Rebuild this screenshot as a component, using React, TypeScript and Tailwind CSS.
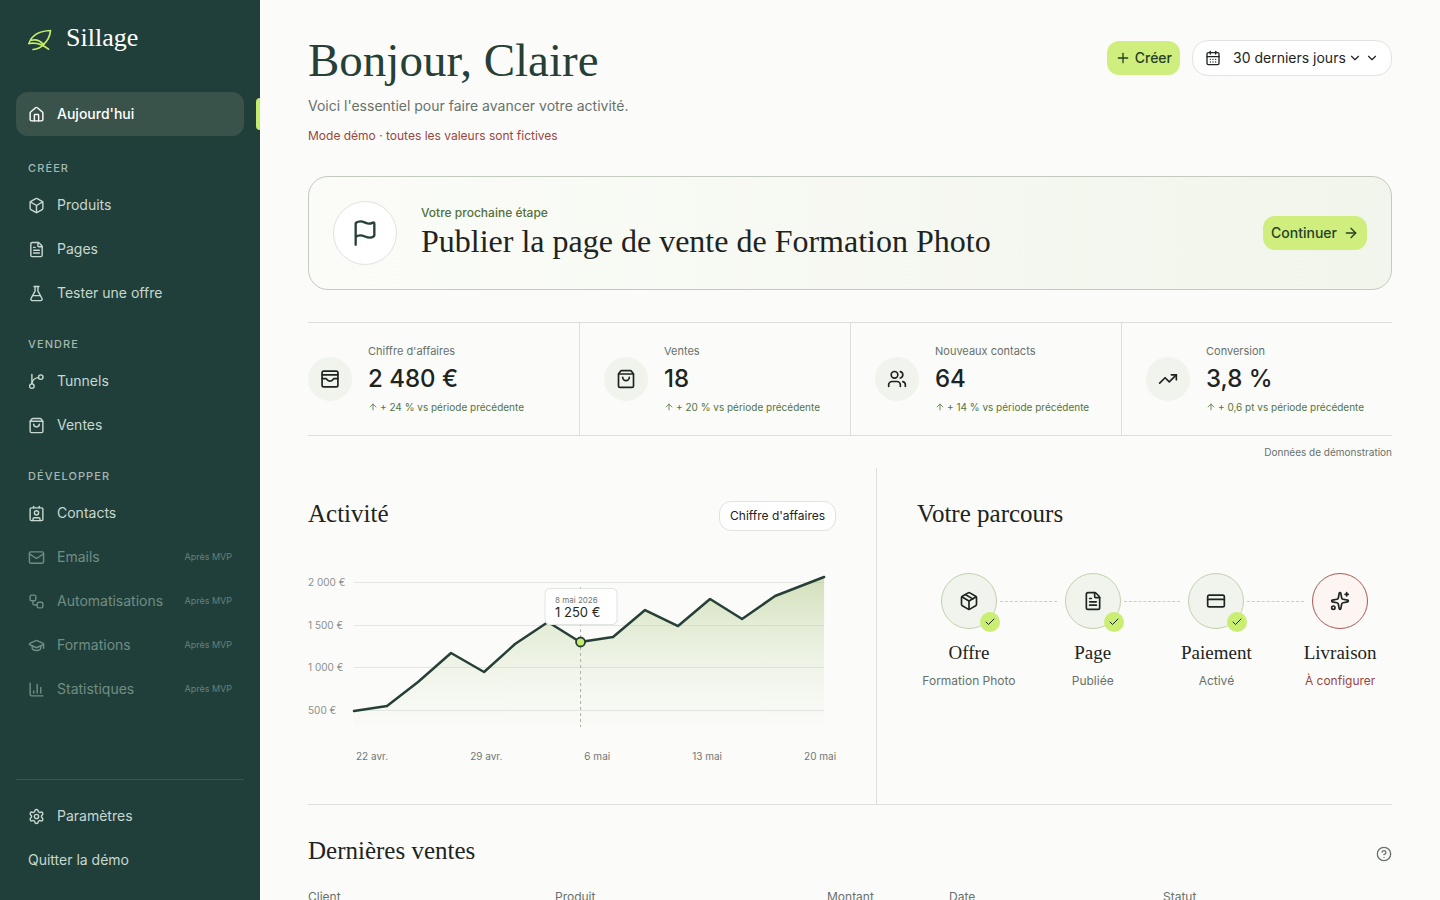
import type { ComponentType, SVGProps } from 'react';
import {
  ArrowRight,
  ArrowUp,
  Box,
  CalendarDays,
  ChartColumn,
  Check,
  ChevronDown,
  CircleQuestionMark,
  Contact,
  CreditCard,
  FileText,
  Flag,
  FlaskConical,
  GraduationCap,
  House,
  Mail,
  Package,
  Plus,
  Settings,
  ShoppingBag,
  Sparkles,
  TrendingUp,
  Users,
  Workflow,
} from 'lucide-react';

type Icon = ComponentType<SVGProps<SVGSVGElement>>;
type NavItem = { label: string; icon: Icon; soon?: boolean };

const serif = "font-['Liberation_Serif',serif]";

function FunnelBranch(props: SVGProps<SVGSVGElement>) {
  return (
    <svg viewBox="0 0 24 24" fill="none" stroke="currentColor" strokeLinecap="round" strokeLinejoin="round" {...props}>
      <path d="M5.500 2v13" />
      <circle cx="5.500" cy="18.500" r="3.200" />
      <circle cx="18" cy="5.800" r="3.200" />
      <path d="M14.800 6.500C9.500 7 6.200 9.500 5.500 15" />
    </svg>
  );
}

function CashBox(props: SVGProps<SVGSVGElement>) {
  return (
    <svg viewBox="0 0 24 24" fill="none" stroke="currentColor" strokeLinecap="round" strokeLinejoin="round" {...props}>
      <rect x="2.500" y="2.500" width="19" height="19" rx="2" />
      <path d="M2.500 7H21.500" />
      <path d="M2.500 11.500H7C8.500 11.500 8.500 14.500 12 14.500S15.500 11.500 17 11.500H21.500" />
    </svg>
  );
}

function Logo() {
  return (
    <svg viewBox="0 0 24 24" className="h-6 w-6" fill="none" stroke="#c5ec6c" strokeWidth="1.700" strokeLinecap="round" strokeLinejoin="round">
      <path d="M1 15.500C3.500 7.500 11 3 22.500 2.500C22 8 19.500 13 15.500 16.500C12 12.500 7 11.300 3.500 12.200" />
      <path d="M1 15.500C7.500 14.200 14 16 20.500 21.200" />
      <path d="M5 21.500C10 21.200 13 19.500 15.500 16.500" />
    </svg>
  );
}

const sections: { title: string; items: NavItem[] }[] = [
  {
    title: 'CRÉER',
    items: [
      { label: 'Produits', icon: Box },
      { label: 'Pages', icon: FileText },
      { label: 'Tester une offre', icon: FlaskConical },
    ],
  },
  {
    title: 'VENDRE',
    items: [
      { label: 'Tunnels', icon: FunnelBranch },
      { label: 'Ventes', icon: ShoppingBag },
    ],
  },
  {
    title: 'DÉVELOPPER',
    items: [
      { label: 'Contacts', icon: Contact },
      { label: 'Emails', icon: Mail, soon: true },
      { label: 'Automatisations', icon: Workflow, soon: true },
      { label: 'Formations', icon: GraduationCap, soon: true },
      { label: 'Statistiques', icon: ChartColumn, soon: true },
    ],
  },
];

const stats = [
  { label: "Chiffre d'affaires", value: '2 480 €', change: '+ 24 %', icon: CashBox },
  { label: 'Ventes', value: '18', change: '+ 20 %', icon: ShoppingBag },
  { label: 'Nouveaux contacts', value: '64', change: '+ 14 %', icon: Users },
  { label: 'Conversion', value: '3,8 %', change: '+ 0,6 pt', icon: TrendingUp },
];

const steps = [
  { title: 'Offre', status: 'Formation Photo', icon: Package, done: true },
  { title: 'Page', status: 'Publiée', icon: FileText, done: true },
  { title: 'Paiement', status: 'Activé', icon: CreditCard, done: true },
  { title: 'Livraison', status: 'À configurer', icon: Sparkles, done: false },
];

function NavLink({ label, icon: Icon, soon }: NavItem) {
  return (
    <a href="#" className={`flex h-11 items-center gap-3 px-3 text-sm ${soon ? 'text-[#6f8d84]' : 'text-[#c6d8d0]'}`}>
      <Icon className="h-[17px] w-[17px]" strokeWidth={2} />
      <span className="flex-1">{label}</span>
      {soon && <span className="text-[9px] text-[#64817a]">Après MVP</span>}
    </a>
  );
}

function Sidebar() {
  return (
    <aside className="flex w-[260px] shrink-0 flex-col bg-[#213f3a] px-4 pb-[18px]">
      <a href="#" className="flex h-[92px] items-start gap-[14px] px-3 pt-5 text-white">
        <span className="pt-2"><Logo /></span>
        <span className={`${serif} text-[26px] leading-9`}>Sillage</span>
      </a>
      <nav className="flex-1">
        <div className="relative mb-[3px]">
          <a href="#" className="flex h-11 items-center gap-3 rounded-xl bg-[#39534b] px-3 text-sm font-medium text-white">
            <House className="h-[17px] w-[17px]" strokeWidth={2} />
            Aujourd'hui
          </a>
          <span className="absolute -right-4 top-1.5 h-8 w-1 rounded-l bg-[#c5ec6c]" />
        </div>
        {sections.map((section) => (
          <div key={section.title}>
            <h2 className="px-3 pb-[7px] pt-[21px] text-[11px] font-medium leading-4 tracking-widest text-[#a3b9b0]">
              {section.title}
            </h2>
            {section.items.map((item) => (
              <NavLink key={item.label} {...item} />
            ))}
          </div>
        ))}
      </nav>
      <div className="border-t border-[#3a564f] pt-[14px]">
        <NavLink label="Paramètres" icon={Settings} />
        <button className="flex h-11 items-center px-3 text-sm text-[#c6d8d0]">Quitter la démo</button>
      </div>
    </aside>
  );
}

// points de la courbe, dans le repère du graphique
const points = [
  [46, 143], [79, 138], [110, 114], [143, 85], [176, 104], [207, 76], [240, 54], [272, 74],
  [305, 69], [337, 42], [370, 58], [402, 31], [434, 51], [467, 28], [516, 9],
];
const line = points.map(([x, y]) => `${x},${y}`).join(' ');

function ActivityChart() {
  return (
    <svg viewBox="0 0 528 168" className="block w-full" role="img" aria-label="Activité sur 30 jours">
      <defs>
        <linearGradient id="area" x1="0" y1="0" x2="0" y2="1">
          <stop offset="0" stopColor="#a8c47a" stopOpacity="0.5" />
          <stop offset="1" stopColor="#dcebd0" stopOpacity="0.05" />
        </linearGradient>
      </defs>
      {['2 000 €', '1 500 €', '1 000 €', '500 €'].map((label, i) => (
        <g key={label}>
          <text x="0" y={18 + Math.round(i * 42.6)} fontSize="10" fill="#8a918c">{label}</text>
          <path d={`M46 ${14.5 + Math.round(i * 42.6)}H516`} stroke="#e3e6e1" />
        </g>
      ))}
      <polygon points={`46,158 ${line} 516,158`} fill="url(#area)" />
      <path d="M272.500 19V159" stroke="#aab3a8" strokeDasharray="3 3" />
      <polyline points={line} fill="none" stroke="#263f37" strokeWidth="2.500" strokeLinejoin="round" strokeLinecap="round" />
      <rect x="237" y="20.500" width="72" height="36" rx="5" fill="#fff" stroke="#e1e5df" />
      <text x="247" y="35" fontSize="8" fill="#707873">8 mai 2026</text>
      <text x="247" y="49" fontSize="13" fill="#1f2925">1 250 €</text>
      <circle cx="272.500" cy="74" r="4.500" fill="#c5ec6c" stroke="#263f37" strokeWidth="1.800" />
    </svg>
  );
}

export default function App() {
  return (
    <div className="flex h-screen bg-[#fbfbf9] font-[Inter,sans-serif] text-[#1d2421]">
      <Sidebar />
      <main className="min-w-0 flex-1 overflow-y-auto px-12 pt-9 [scrollbar-width:none]">
        {/* En-tête */}
        <header className="flex items-start justify-between">
          <div>
            <h1 className={`${serif} text-[47px] leading-[48px] text-[#263f37]`}>Bonjour, Claire</h1>
            <p className="mt-3 text-sm leading-5 text-[#68716c]">Voici l'essentiel pour faire avancer votre activité.</p>
            <p className="mt-3 text-xs leading-4 text-[#9a4640]">Mode démo · toutes les valeurs sont fictives</p>
          </div>
          <div className="flex items-center gap-3 pt-1">
            <button className="flex h-[34px] items-center gap-1 rounded-xl bg-[#cfee7e] px-2 text-sm font-medium text-[#263f24]">
              <Plus className="h-4 w-4" />
              Créer
            </button>
            <button className="flex h-9 w-[200px] items-center rounded-2xl border border-[#e1e4de] bg-white px-3 text-sm">
              <CalendarDays className="h-4 w-4" strokeWidth={2} />
              <span className="ml-3 mr-0.5 whitespace-nowrap">30 derniers jours</span>
              <ChevronDown className="h-3.5 w-3.5" />
              <ChevronDown className="ml-auto h-3.5 w-3.5" />
            </button>
          </div>
        </header>

        {/* Prochaine étape */}
        <section className="mt-8 flex items-center gap-6 rounded-[20px] border border-[#c3cbbf] bg-linear-to-r from-[#fbfcf8] to-[#f1f5eb] p-6">
          <div className="flex h-16 w-16 items-center justify-center rounded-full border border-[#dfe3df] bg-white text-[#263f37]">
            <Flag className="h-7 w-7" strokeWidth={2} />
          </div>
          <div className="flex-1">
            <p className="text-xs font-medium leading-4 text-[#55703a]">Votre prochaine étape</p>
            <h2 className={`${serif} text-[32px] leading-10`}>Publier la page de vente de Formation Photo</h2>
          </div>
          <button className="flex h-[34px] items-center gap-1.5 rounded-xl bg-[#cfee7e] px-2 text-sm font-medium text-[#263f24]">
            Continuer
            <ArrowRight className="h-4 w-4" />
          </button>
        </section>

        {/* Indicateurs */}
        <section className="mt-8 grid grid-cols-4 border-y border-[#dcdfda]">
          {stats.map(({ label, value, change, icon: Icon }) => (
            <div key={label} className="flex h-28 items-center gap-4 border-l border-[#dcdfda] pl-6 first:border-l-0 first:pl-0">
              <div className="flex h-11 w-11 shrink-0 items-center justify-center rounded-full bg-[#f0f4ed]">
                <Icon className="h-5 w-5" strokeWidth={2} />
              </div>
              <div>
                <p className="text-[11px] leading-4 text-[#68716c]">{label}</p>
                <p className="my-1 text-2xl font-medium leading-8">{value}</p>
                <p className="flex items-center gap-0.5 whitespace-nowrap text-[10px] leading-4 text-[#55753f]">
                  <ArrowUp className="h-2.5 w-2.5" />
                  {change} vs période précédente
                </p>
              </div>
            </div>
          ))}
        </section>
        <p className="mt-2 pb-2 text-right text-[10px] leading-4 text-[#68716c]">Données de démonstration</p>

        <div className="grid grid-cols-[21fr_19fr] border-b border-[#dcdfda]">
          {/* Activité */}
          <section className="border-r border-[#dcdfda] pb-10 pr-10 pt-8">
            <div className="flex h-8 items-start justify-between">
              <h2 className={`${serif} text-[25px] leading-7`}>Activité</h2>
              <button className="mt-px h-[30px] rounded-xl border border-[#e1e4de] bg-white px-[10px] text-xs">
                Chiffre d'affaires
              </button>
            </div>
            <div className="pt-9">
              <ActivityChart />
            </div>
            <div className="flex justify-between pl-12 pt-3 text-[10px] leading-4 text-[#707873]">
              <span>22 avr.</span>
              <span>29 avr.</span>
              <span>6 mai</span>
              <span>13 mai</span>
              <span>20 mai</span>
            </div>
          </section>

          {/* Parcours */}
          <section className="pl-10 pt-8">
            <h2 className={`${serif} text-[25px] leading-7`}>Votre parcours</h2>
            <ol className="mt-[45px] grid grid-cols-4 gap-5">
              {steps.map(({ title, status, icon: Icon, done }) => (
                <li key={title} className="relative flex flex-col items-center whitespace-nowrap">
                  <div
                    className={`relative flex h-14 w-14 items-center justify-center rounded-full border ${
                      done ? 'border-[#c2d1ac] bg-[#f0f4ed]' : 'border-[#a85a55] bg-[#fdf5f2]'
                    }`}
                  >
                    <Icon className="h-5 w-5" strokeWidth={2} />
                    {done && (
                      <span className="absolute -bottom-1 -right-1 flex h-5 w-5 items-center justify-center rounded-full bg-[#c9ee72]">
                        <Check className="h-3 w-3" />
                      </span>
                    )}
                  </div>
                  {done && (
                    <span className="absolute left-[calc(50%+31px)] top-7 w-[calc(100%-47px)] border-t border-dashed border-[#c9cec6]" />
                  )}
                  <h3 className={`${serif} mt-3 text-[19px] leading-6`}>{title}</h3>
                  <p className={`mt-2 text-xs leading-4 ${done ? 'text-[#68716c]' : 'text-[#9a4640]'}`}>{status}</p>
                </li>
              ))}
            </ol>
          </section>
        </div>

        {/* Dernières ventes */}
        <section className="pt-[30px]">
          <div className="flex items-end justify-between">
            <h2 className={`${serif} text-[25px] leading-8`}>Dernières ventes</h2>
            <button aria-label="Aide" className="pb-[5px] text-[#68716c]">
              <CircleQuestionMark className="h-4 w-4" />
            </button>
          </div>
          <table className="mt-[22px] w-full table-fixed text-left text-xs leading-4 text-[#68716c]">
            <thead>
              <tr>
                <th className="w-[247px] font-normal">Client</th>
                <th className="w-[272px] font-normal">Produit</th>
                <th className="w-[122px] font-normal">Montant</th>
                <th className="w-[214px] font-normal">Date</th>
                <th className="font-normal">Statut</th>
              </tr>
            </thead>
          </table>
        </section>
      </main>
    </div>
  );
}
